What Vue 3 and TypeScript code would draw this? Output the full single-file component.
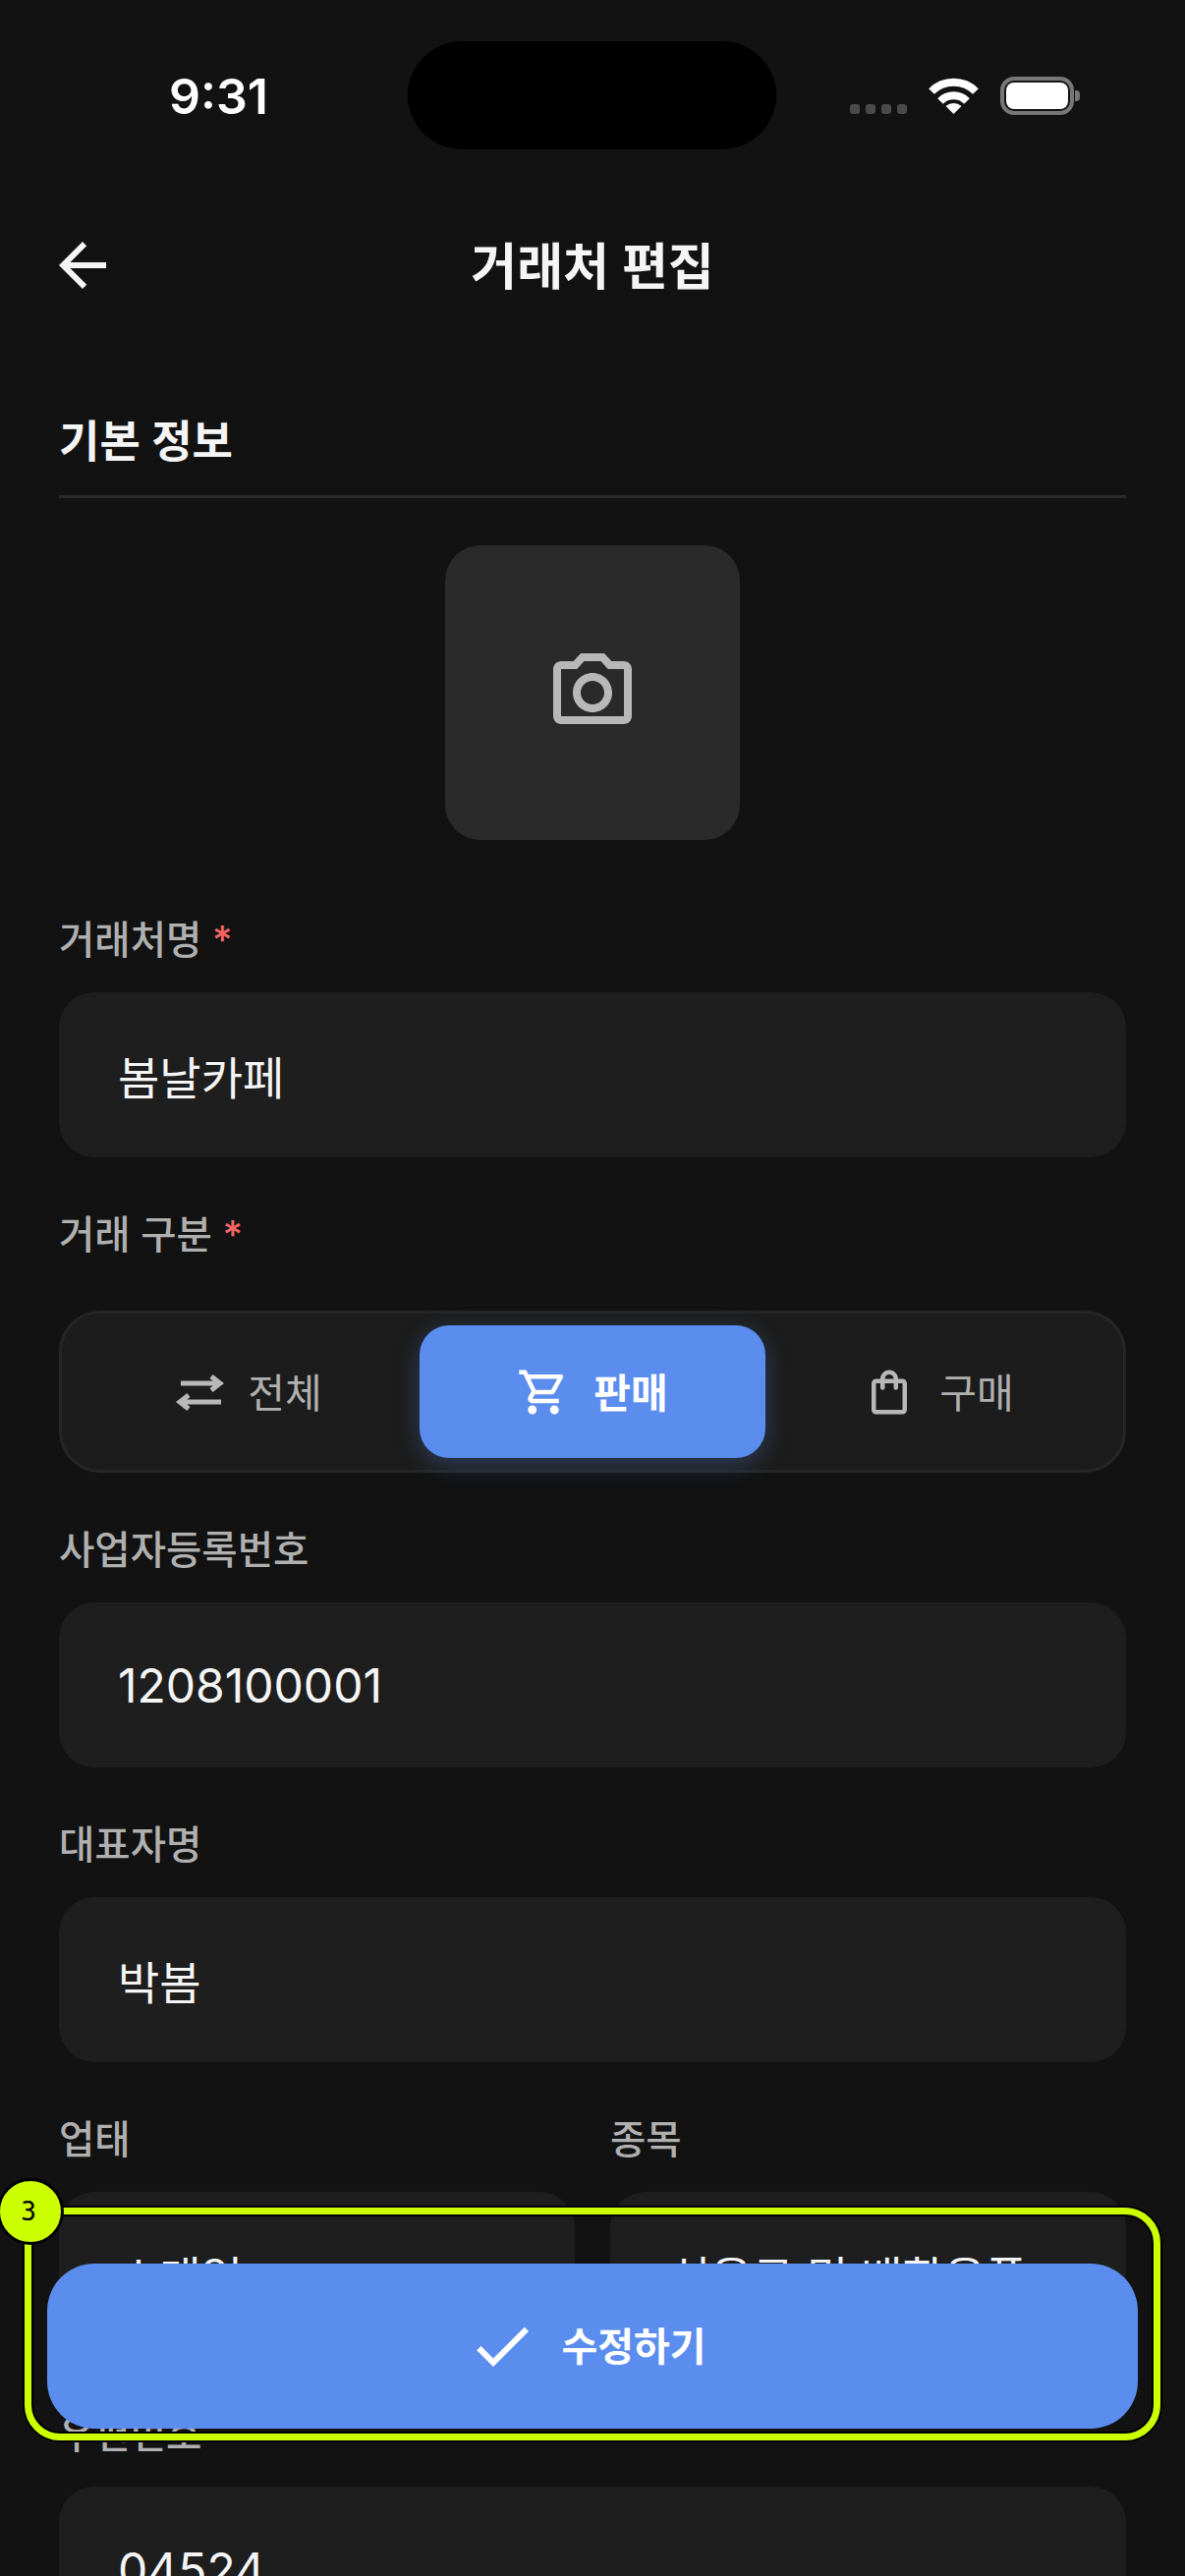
<script setup lang="ts">
interface Segment {
  key: string
  label: string
  active: boolean
}

const segments: Segment[] = [
  { key: 'all', label: '전체', active: false },
  { key: 'sale', label: '판매', active: true },
  { key: 'buy', label: '구매', active: false },
]
</script>

<template>
  <div class="page">
    <div class="status">
      <span class="time">9:31</span>
      <div class="status-icons">
        <div class="dots"><i></i><i></i><i></i><i></i></div>
        <svg class="wifi" width="51" height="37" viewBox="0 0 51 37">
          <path d="M3 14A32 32 0 0 1 48 14" fill="none" stroke="#fff" stroke-width="8" />
          <path d="M12 24A19 19 0 0 1 39 24" fill="none" stroke="#fff" stroke-width="8" />
          <path d="M25.5 37L17.5 29A12 12 0 0 1 33.5 29Z" fill="#fff" />
        </svg>
        <div class="battery"><div class="battery-fill"></div></div>
      </div>
    </div>
    <div class="island"></div>

    <header class="header">
      <svg class="back" width="72" height="72" viewBox="0 0 24 24">
        <path fill="#f5f5f5" d="M20 11H7.83l5.59-5.59L12 4l-8 8 8 8 1.41-1.41L7.83 13H20v-2z" />
      </svg>
      <h1 class="title">거래처 편집</h1>
    </header>

    <main class="content">
      <h2 class="section">기본 정보</h2>

      <div class="photo">
        <svg width="96" height="96" viewBox="0 0 24 24">
          <path fill="#b8b8b8" d="M14.12 4l1.83 2H20v12H4V6h4.05l1.83-2h4.24M15 2H9L7.17 4H4c-1.1 0-2 .9-2 2v12c0 1.1.9 2 2 2h16c1.1 0 2-.9 2-2V6c0-1.1-.9-2-2-2h-3.17L15 2zm-3 7c1.65 0 3 1.35 3 3s-1.35 3-3 3-3-1.35-3-3 1.35-3 3-3m0-2c-2.76 0-5 2.24-5 5s2.24 5 5 5 5-2.24 5-5-2.24-5-5-5z" />
        </svg>
      </div>

      <div class="group">
        <label class="label">거래처명 <span class="req">*</span></label>
        <div class="field">봄날카페</div>
      </div>

      <div class="group">
        <label class="label seg-label">거래 구분 <span class="req">*</span></label>
        <div class="seg">
          <div v-for="s in segments" :key="s.key" class="seg-item" :class="{ active: s.active }">
            <svg v-if="s.key === 'all'" width="54" height="54" viewBox="-5 0 54 54" fill="none" stroke="#b8b8b8" stroke-width="5">
              <path d="M5 18H45M36 11L45 18L36 25" />
              <path d="M46 37H5M13 30L4 37L13 44" />
            </svg>
            <svg v-else-if="s.key === 'sale'" width="54" height="54" viewBox="0 0 24 24">
              <path fill="#fff" d="M15.55 13c.75 0 1.41-.41 1.75-1.03l3.58-6.49c.37-.66-.11-1.48-.87-1.48H5.21l-.94-2H1v2h2l3.6 7.59-1.35 2.44C4.52 15.37 5.48 17 7 17h12v-2H7l1.1-2h7.45zM6.16 6h12.15l-2.76 5H8.53L6.16 6zM7 18c-1.1 0-1.99.9-1.99 2S5.9 22 7 22s2-.9 2-2-.9-2-2-2zm10 0c-1.1 0-1.99.9-1.99 2s.89 2 1.99 2 2-.9 2-2-.9-2-2-2z" />
            </svg>
            <svg v-else width="54" height="54" viewBox="0 0 24 24">
              <path fill="#b8b8b8" d="M18 6h-2c0-2.21-1.79-4-4-4S8 3.79 8 6H6c-1.1 0-2 .9-2 2v12c0 1.1.9 2 2 2h12c1.1 0 2-.9 2-2V8c0-1.1-.9-2-2-2zm-6-2c1.1 0 2 .9 2 2h-4c0-1.1.9-2 2-2zm6 16H6V8h2v2c0 .55.45 1 1 1s1-.45 1-1V8h4v2c0 .55.45 1 1 1s1-.45 1-1V8h2v12z" />
            </svg>
            <span class="seg-text">{{ s.label }}</span>
          </div>
        </div>
      </div>

      <div class="group">
        <label class="label">사업자등록번호</label>
        <div class="field num">1208100001</div>
      </div>

      <div class="group">
        <label class="label">대표자명</label>
        <div class="field">박봄</div>
      </div>

      <div class="row">
        <div class="group">
          <label class="label">업태</label>
          <div class="field">소매업</div>
        </div>
        <div class="group">
          <label class="label">종목</label>
          <div class="field">식용구 및 배합용품</div>
        </div>
      </div>

      <div class="group">
        <label class="label">우편번호</label>
        <div class="field num">04524</div>
      </div>
    </main>

    <div class="highlight"></div>
    <button class="submit" type="button">
      <svg width="72" height="72" viewBox="0 0 24 24">
        <path fill="#fff" d="M9 16.17L4.83 12l-1.42 1.41L9 19 21 7l-1.41-1.41z" />
      </svg>
      <span class="submit-text">수정하기</span>
    </button>
    <div class="badge">3</div>
  </div>
</template>

<style>
html,
body {
  margin: 0;
  background: #121212;
}
</style>

<style scoped>
.page {
  position: relative;
  width: 1206px;
  height: 2622px;
  overflow: hidden;
  background: #121212;
  color: #f5f5f5;
  font-family: Inter, "Noto Sans CJK KR", sans-serif;
}

.status {
  height: 180px;
  box-sizing: border-box;
  padding: 0 113px 0 172px;
  display: flex;
  justify-content: space-between;
}

.time {
  margin-top: 68px;
  font-size: 50px;
  line-height: 60px;
  font-weight: 600;
  color: #fff;
}

.status-icons {
  margin-top: 78px;
  height: 39px;
  display: flex;
  align-items: flex-end;
}

.dots {
  display: flex;
  gap: 6px;
  margin-bottom: 1px;
  margin-right: 22px;
}

.dots i {
  width: 10px;
  height: 10px;
  border-radius: 3px;
  background: #4a4a4a;
}

.wifi {
  margin-bottom: 1px;
  margin-right: 22px;
}

.battery {
  position: relative;
  width: 75px;
  height: 39px;
  box-sizing: border-box;
  padding: 2px;
  border: 4px solid #777;
  border-radius: 14px;
}

.battery::after {
  content: "";
  position: absolute;
  left: 72px;
  top: 10px;
  width: 5px;
  height: 11px;
  border-radius: 0 4px 4px 0;
  background: #777;
}

.battery-fill {
  height: 100%;
  background: #fff;
  border-radius: 8px;
}

.island {
  position: absolute;
  left: 415px;
  top: 42px;
  width: 375px;
  height: 110px;
  border-radius: 55px;
  background: #000;
}

.header {
  height: 180px;
  padding: 0 48px;
  display: flex;
  align-items: center;
  position: relative;
}

.back {
  display: block;
}

.title {
  position: absolute;
  left: 0;
  right: 0;
  margin: 3px 0 0;
  text-align: center;
  font-size: 51px;
  line-height: 72px;
  font-weight: 600;
}

.content {
  padding: 0 60px;
}

.section {
  margin: 60px 0 0;
  padding-bottom: 24px;
  border-bottom: 3px solid #2a2a2a;
  font-size: 45px;
  line-height: 60px;
  font-weight: 600;
}

.photo {
  width: 300px;
  height: 300px;
  margin: 48px auto 74px;
  border-radius: 36px;
  background: #2a2a2a;
  display: flex;
  align-items: center;
  justify-content: center;
}

.group {
  margin-bottom: 51px;
}

.label {
  display: block;
  height: 57px;
  margin-bottom: 24px;
  font-size: 39.5px;
  line-height: 57px;
  font-weight: 500;
  color: #b0b0b0;
}

.seg-label {
  margin-bottom: 48px;
}

.req {
  color: #f56565;
}

.field {
  height: 168px;
  box-sizing: border-box;
  padding: 0 60px;
  border-radius: 36px;
  background: #1e1e1e;
  display: flex;
  align-items: center;
  font-size: 46px;
  color: #f5f5f5;
  white-space: nowrap;
}

.field.num {
  font-size: 48px;
}

.seg {
  height: 165px;
  margin-bottom: 2px;
  box-sizing: border-box;
  padding: 12px;
  border: 3px solid #262626;
  border-radius: 42px;
  background: #1c1c1c;
  display: grid;
  grid-template-columns: repeat(3, 1fr);
}

.seg-item {
  display: flex;
  align-items: center;
  justify-content: center;
  gap: 24px;
  border-radius: 30px;
  font-size: 41px;
  color: #b0b0b0;
}

.seg-text {
  margin-bottom: 4px;
}

.seg-item.active {
  background: #5b8dee;
  color: #fff;
  font-weight: 600;
  box-shadow: 0 6px 24px rgba(91, 141, 238, 0.3);
}

.row {
  display: grid;
  grid-template-columns: 525px 525px;
  gap: 36px;
}

.highlight {
  position: absolute;
  left: 25px;
  top: 2247px;
  width: 1156px;
  height: 237px;
  box-sizing: border-box;
  border: 7px solid #ccff00;
  border-radius: 36px;
  box-shadow: 0 0 0 2px #000, inset 0 0 0 2px #000;
}

.submit {
  position: absolute;
  left: 48px;
  top: 2304px;
  width: 1110px;
  height: 168px;
  padding: 0 12px 0 0;
  border: 0;
  border-radius: 48px;
  background: #5b8dee;
  color: #fff;
  font: inherit;
  font-size: 40px;
  font-weight: 600;
  display: flex;
  align-items: center;
  justify-content: center;
  gap: 24px;
}

.submit-text {
  margin-bottom: 5px;
}

.badge {
  position: absolute;
  left: -3px;
  top: 2217px;
  width: 68px;
  height: 68px;
  box-sizing: border-box;
  padding-right: 4px;
  border: 3px solid #000;
  border-radius: 50%;
  background: #ccff00;
  color: #000;
  display: flex;
  align-items: center;
  justify-content: center;
  font-family: "DejaVu Sans Mono", monospace;
  font-size: 26px;
}
</style>
